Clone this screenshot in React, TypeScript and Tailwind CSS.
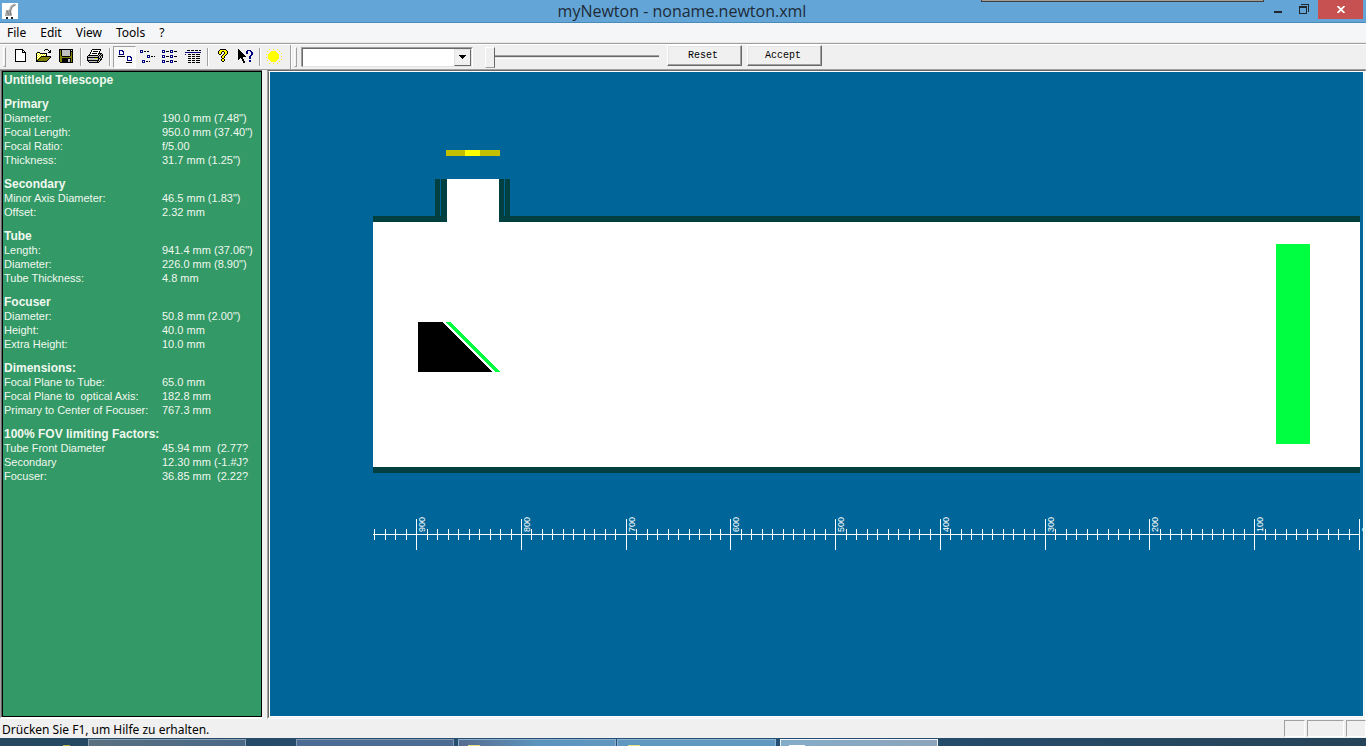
import type { ReactNode } from "react";

const PALETTE: Record<string, string> = {
  "#": "#000000",
  w: "#ffffff",
  o: "#808000",
  y: "#ffff00",
  n: "#000080",
  g: "#c0c0c0",
  d: "#808080",
};

function Bitmap({ rows }: { rows: string[] }) {
  const width = Math.max(...rows.map((r) => r.length));
  const cells: ReactNode[] = [];
  rows.forEach((row, y) => {
    let x = 0;
    while (x < row.length) {
      const ch = row[x];
      let end = x + 1;
      while (end < row.length && row[end] === ch) end++;
      if (PALETTE[ch]) {
        cells.push(<rect key={`${x}-${y}`} x={x} y={y} width={end - x} height={1} fill={PALETTE[ch]} />);
      }
      x = end;
    }
  });
  return (
    <svg width={width} height={rows.length} shapeRendering="crispEdges" aria-hidden="true">
      {cells}
    </svg>
  );
}

const NEW_ICON = [
  "########...",
  "#wwwwww##..",
  "#wwwwww#w#.",
  "#wwwwww####",
  "#wwwwwwwww#",
  "#wwwwwwwww#",
  "#wwwwwwwww#",
  "#wwwwwwwww#",
  "#wwwwwwwww#",
  "#wwwwwwwww#",
  "#wwwwwwwww#",
  "#wwwwwwwww#",
  "###########",
];
const OPEN_ICON = [
  ".........###....",
  "........#...#.#.",
  ".............##.",
  ".###........###.",
  "#ywy#######.....",
  "#wywywywyw#.....",
  "#ywywywywy#.....",
  "#wywy##########.",
  "#ywy#ooooooooo#.",
  "#wy#ooooooooo#..",
  "#y#ooooooooo#...",
  "##ooooooooo#....",
  "###########.....",
];
const SAVE_ICON = [
  "##############.",
  "#o#gggggggg#g#",
  "#o#gggggggg###",
  "#o#gggggggg#o#",
  "#o#gggggggg#o#",
  "#o#gggggggg#o#",
  "#o#gggggggg#o#",
  "#oo########oo#",
  "#oooooooooooo#",
  "#oo#########o#",
  "#oo######gg#o#",
  "#oo######gg#o#",
  "#oo######gg#o#",
  ".#############",
];
const PRINT_ICON = [
  ".....#########...",
  "....#wwwwwwww#..",
  "....#w#####w#...",
  "...#wwwwwwww#...",
  "...#w#####w####.",
  "..#wwwwwwww#g#g#",
  ".##########g#g##",
  "#gggggggggg#g#g#",
  "############g#g#",
  "#gggggggyyg##g#.",
  "#gggggggggg#g##.",
  "############g#..",
  ".#gggggggg#g#...",
  "..##########....",
];
const LARGE_ICON = [
  "",
  ".nnnn.........",
  ".nwwnn........",
  ".nwwwn........",
  ".nwwwn........",
  ".nnnnn........",
  "..............",
  "#######..nnnn.",
  ".........nwwnn",
  ".........nwwwn",
  ".........nwwwn",
  ".........nnnnn",
  "..............",
  "........######",
];
const SMALL_ICON = [
  "",
  "nnn............",
  "nwn.##.##......",
  "nnn............",
  "...............",
  "...............",
  ".......nnn.....",
  ".......nwn.##.#",
  ".......nnn.....",
  "...............",
  "...............",
  "..nnn..........",
  "..nwn.##.#.....",
  "..nnn..........",
];
const LIST_ICON = [
  "",
  "nnn.....nnn......",
  "nwn.###.nwn.###",
  "nnn.....nnn....",
  "...............",
  "...............",
  "nnn.....nnn....",
  "nwn.###.nwn.###",
  "nnn.....nnn....",
  "...............",
  "...............",
  "nnn.....nnn....",
  "nwn.###.nwn.###",
  "nnn.....nnn....",
];
const DETAIL_ICON = [
  "",
  "..###.###.###.##.",
  "................",
  "nnnnnnnnnnnnnnnn",
  "................",
  "n..###.###.####",
  "................",
  "...###.###.####",
  "................",
  "...###.###.####",
  "................",
  "...###.###.####",
  "................",
  "...###.###.####",
];
const HELP_ICON = [
  "..######..",
  ".#yyyyyy#.",
  "#yyy##yyy#",
  "#yy#..#yy#",
  "#yy#..#yy#",
  ".##..#yy#.",
  "....#yy#..",
  "...#yy#...",
  "...#yy#...",
  "....##....",
  "...#yy#...",
  "...#yy#...",
  "....##....",
];
const CONTEXT_ICON = [
  "#...............",
  "##.......nnnn...",
  "###.....nn..nn..",
  "####....nn...nn.",
  "#####...nn...nn.",
  "######.......nn.",
  "#######.....nn..",
  "########...nn...",
  "#####......nn...",
  "##.##......nn...",
  "#...##..........",
  "....##.....nn...",
  ".....##....nn...",
  ".....##.........",
];
const SUN_ICON = [
  "...y...y...y.....",
  "................",
  ".y...yyyyy...y..",
  "....yyyyyyy.....",
  "...yyyyyyyyy...y",
  "y.yyyyyyyyyyy...",
  "..yyyyyyyyyyy...",
  "..yyyyyyyyyyy..y",
  "y.yyyyyyyyyyy...",
  "..yyyyyyyyyyy...",
  "...yyyyyyyyy...y",
  ".y..yyyyyyy.....",
  ".....yyyyy...y..",
  "................",
  "...y...y...y....",
];

function ToolButton({ label, rows, pressed }: { label: string; rows: string[]; pressed?: boolean }) {
  return (
    <button
      type="button"
      aria-label={label}
      aria-pressed={pressed}
      className={
        pressed
          ? "flex h-[22px] w-[23px] shrink-0 justify-center border border-t-[#a0a0a0] border-l-[#a0a0a0] border-r-white border-b-white bg-[#f8f8f8] pt-[2px]"
          : "flex h-[22px] w-[23px] shrink-0 justify-center border border-transparent pt-[2px]"
      }
    >
      <Bitmap rows={rows} />
    </button>
  );
}

function Separator() {
  return (
    <div className="flex h-[18px] w-[6px] shrink-0 justify-center">
      <div className="w-[2px] border-r border-l border-l-[#a0a0a0] border-r-white" />
    </div>
  );
}

function Grip() {
  return <div className="h-[20px] w-[3px] shrink-0 border border-t-white border-l-white border-r-[#a0a0a0] border-b-[#a0a0a0]" />;
}

type Section = { title: string; rows: [string, string][] };

const SECTIONS: Section[] = [
  {
    title: "Primary",
    rows: [
      ["Diameter:", '190.0 mm (7.48")'],
      ["Focal Length:", '950.0 mm (37.40")'],
      ["Focal Ratio:", "f/5.00"],
      ["Thickness:", '31.7 mm (1.25")'],
    ],
  },
  {
    title: "Secondary",
    rows: [
      ["Minor Axis Diameter:", '46.5 mm (1.83")'],
      ["Offset:", "2.32 mm"],
    ],
  },
  {
    title: "Tube",
    rows: [
      ["Length:", '941.4 mm (37.06")'],
      ["Diameter:", '226.0 mm (8.90")'],
      ["Tube Thickness:", "4.8 mm"],
    ],
  },
  {
    title: "Focuser",
    rows: [
      ["Diameter:", '50.8 mm (2.00")'],
      ["Height:", "40.0 mm"],
      ["Extra Height:", "10.0 mm"],
    ],
  },
  {
    title: "Dimensions:",
    rows: [
      ["Focal Plane to Tube:", "65.0 mm"],
      ["Focal Plane to  optical Axis:", "182.8 mm"],
      ["Primary to Center of Focuser:", "767.3 mm"],
    ],
  },
  {
    title: "100% FOV limiting Factors:",
    rows: [
      ["Tube Front Diameter", "45.94 mm  (2.77?"],
      ["Secondary", "12.30 mm (-1.#J?"],
      ["Focuser:", "36.85 mm  (2.22?"],
    ],
  },
];

function DataPanel() {
  return (
    <aside className="w-[262px] shrink-0 border-t border-b-2 border-l border-t-[#696969] border-b-white border-l-[#a0a0a0]">
      <div className="h-full border-l border-l-[#696969]">
        <div className="flex h-full flex-col gap-[10px] overflow-hidden border border-black bg-[#339966] px-px pt-px font-['Liberation_Sans',Arial,sans-serif] text-[11px] leading-[14px] text-[#f0f8f0]">
          <h1 className="text-[12px] leading-[14px] font-bold">Untitleld Telescope</h1>
          {SECTIONS.map((s) => (
            <section key={s.title}>
              <h2 className="text-[12px] leading-[14px] font-bold">{s.title}</h2>
              <dl className="grid grid-cols-[158px_1fr] whitespace-pre">
                {s.rows.map(([k, v]) => (
                  <div key={k} className="contents">
                    <dt>{k}</dt>
                    <dd>{v}</dd>
                  </div>
                ))}
              </dl>
            </section>
          ))}
        </div>
      </div>
    </aside>
  );
}

const SCALE_ORIGIN = 1089;
const UNIT = 10.475;

const tickX = (i: number) => Math.ceil(SCALE_ORIGIN - i * UNIT - 0.5);

function Drawing() {
  const ticks = Array.from({ length: 95 }, (_, i) => i);
  return (
    <svg viewBox="0 0 1093 644" preserveAspectRatio="xMinYMin meet" className="block h-full w-full" shapeRendering="crispEdges" role="img" aria-label="Telescope cross section">
      <rect x="176" y="78" width="54" height="6" fill="#c4c000" />
      <rect x="195" y="78" width="15" height="6" fill="#ffff00" />
      <rect x="103" y="144" width="987" height="257" fill="#004040" />
      <rect x="103" y="150" width="987" height="245" fill="#ffffff" />
      <rect x="165" y="107" width="5" height="38" fill="#004040" />
      <rect x="171" y="107" width="6" height="38" fill="#004040" />
      <rect x="229" y="107" width="5" height="38" fill="#004040" />
      <rect x="235" y="107" width="5" height="38" fill="#004040" />
      <rect x="177" y="107" width="52" height="44" fill="#ffffff" />
      <polygon points="148,250 173,250 222.5,300 148,300" fill="#000000" />
      <polygon points="176,250 181,250 230,300 225,300" fill="#00ff40" />
      <rect x="1006" y="172" width="34" height="200" fill="#00ff40" />
      <rect x="103" y="462" width="987" height="1" fill="#ffffff" />
      {ticks.map((i) => {
        const major = i % 10 === 0;
        return <rect key={i} x={tickX(i)} y={major ? 447 : 457} width="1" height={major ? 31 : 11} fill="#ffffff" />;
      })}
      {ticks
        .filter((i) => i % 10 === 0)
        .map((i) => (
          <text key={i} transform={`translate(${tickX(i) + 9} 460) rotate(-90)`} className="fill-white font-['Liberation_Sans',Arial,sans-serif] text-[9px]">
            {i * 10}
          </text>
        ))}
    </svg>
  );
}

function TitleBar() {
  return (
    <header className="relative flex h-[23px] shrink-0 items-start border-b border-b-[#4a8ab8] bg-[#62a5d6] pr-[3px] pl-[2px]">
      <div className="absolute top-0 right-[102px] h-[2px] w-[283px] border-x border-b border-[#404040] bg-[#a09c98]" />
      <svg width="16" height="16" viewBox="0 0 16 16" className="mt-[3px] shrink-0" aria-hidden="true">
        <rect width="16" height="16" fill="#ffffff" />
        <path d="M8 8 L9.500 3.500 L13 1.500" fill="none" stroke="#b0b0b0" strokeWidth="2.400" />
        <path d="M10 4 L14 1.500M8 9l2-5" stroke="#808080" strokeWidth="0.800" />
        <path d="M4 7h5l1 6H3z" fill="#a8a8a8" />
        <path d="M5 8l2 4M8 7l1 5" stroke="#7a7a7a" strokeWidth="1" />
        <path d="M4 14h2v2H4zM9 14h2v2H9z" fill="#202020" />
      </svg>
      <div className="min-w-0 flex-1 pl-[72px] text-center text-[16px] leading-[23px] text-[#1e2a36]">
        myNewton - noname.newton.xml
      </div>
      <div className="flex h-[19px] shrink-0">
        <button type="button" aria-label="Minimize" className="flex w-[25px] items-start pt-[11px]">
          <span className="h-[2px] w-[8px] bg-[#1f262c]" />
        </button>
        <button type="button" aria-label="Restore" className="flex w-[19px] items-start pt-[4px]">
          <svg width="10" height="10" viewBox="0 0 10 10" shapeRendering="crispEdges" className="shrink-0">
            <path d="M2 0h8v8h-1V1H2z" fill="#1f262c" />
            <path d="M0 2h8v8H0zM1 4v5h6V4z" fillRule="evenodd" fill="#1f262c" />
          </svg>
        </button>
        <button type="button" aria-label="Close" className="flex w-[45px] items-start justify-center bg-[#c75050] pt-[6px]">
          <svg width="8" height="7" viewBox="0 0 8 7">
            <path d="M0.500 0l7 7M7.500 0l-7 7" stroke="#ffffff" strokeWidth="1.800" />
          </svg>
        </button>
      </div>
    </header>
  );
}

function Toolbar() {
  return (
    <div className="flex h-[25px] shrink-0 items-center overflow-hidden border-b border-b-[#a0a0a0] bg-[#f0f0f0] pl-[3px]">
      <Grip />
      <div className="flex items-center pl-[3px]">
        <ToolButton label="New" rows={NEW_ICON} />
        <ToolButton label="Open" rows={OPEN_ICON} />
        <ToolButton label="Save" rows={SAVE_ICON} />
        <Separator />
        <ToolButton label="Print" rows={PRINT_ICON} />
        <Separator />
        <ToolButton label="Large icons" rows={LARGE_ICON} pressed />
        <ToolButton label="Small icons" rows={SMALL_ICON} />
        <ToolButton label="List" rows={LIST_ICON} />
        <ToolButton label="Details" rows={DETAIL_ICON} />
        <Separator />
        <ToolButton label="About" rows={HELP_ICON} />
        <ToolButton label="Context help" rows={CONTEXT_ICON} />
        <Separator />
        <ToolButton label="Rays" rows={SUN_ICON} />
      </div>
      <div className="mr-[2px] ml-[4px] h-full w-[2px] border-r border-l border-l-[#a0a0a0] border-r-white" />
      <Grip />
      <div className="ml-[4px] grid h-[20px] w-[172px] shrink-0 border border-t-[#a0a0a0] border-l-[#a0a0a0] border-r-white border-b-white">
        <div className="grid border border-t-[#696969] border-l-[#696969] border-r-[#e3e3e3] border-b-[#e3e3e3] bg-white">
          <select aria-label="Element" className="col-start-1 row-start-1 h-full w-full appearance-none bg-white text-[11px] outline-none">
            <option></option>
          </select>
          <div className="pointer-events-none col-start-1 row-start-1 flex w-[17px] items-center justify-center justify-self-end border border-t-[#e3e3e3] border-l-[#e3e3e3] border-r-[#696969] border-b-[#696969] bg-[#f0f0f0]">
            <Bitmap rows={["#######", ".#####.", "..###..", "...#..."]} />
          </div>
        </div>
      </div>
      <input
        type="range"
        aria-label="Value"
        min={0}
        max={100}
        defaultValue={0}
        className="ml-[12px] h-[22px] w-[174px] shrink-0 appearance-none bg-transparent [&::-webkit-slider-runnable-track]:h-[4px] [&::-webkit-slider-runnable-track]:border-y [&::-webkit-slider-runnable-track]:border-t-[#a0a0a0] [&::-webkit-slider-runnable-track]:border-b-white [&::-webkit-slider-runnable-track]:bg-linear-to-b [&::-webkit-slider-runnable-track]:from-[#696969] [&::-webkit-slider-runnable-track]:from-50% [&::-webkit-slider-runnable-track]:to-[#e3e3e3] [&::-webkit-slider-runnable-track]:to-50% [&::-webkit-slider-thumb]:-mt-[9px] [&::-webkit-slider-thumb]:h-[21px] [&::-webkit-slider-thumb]:w-[10px] [&::-webkit-slider-thumb]:appearance-none [&::-webkit-slider-thumb]:border [&::-webkit-slider-thumb]:border-t-white [&::-webkit-slider-thumb]:border-r-[#696969] [&::-webkit-slider-thumb]:border-b-[#a0a0a0] [&::-webkit-slider-thumb]:border-l-white [&::-webkit-slider-thumb]:bg-[#f0f0f0]"
      />
      <div className="ml-[8px] flex gap-[5px] self-start font-['Liberation_Mono','Courier_New',monospace] text-[10px] leading-[18px]">
        {["Reset", "Accept"].map((t) => (
          <button
            key={t}
            type="button"
            className="h-[21px] w-[75px] border border-t-white border-l-white border-r-[#696969] border-b-[#696969] bg-[#f0f0f0] pt-px pr-[3px] text-black shadow-[inset_-1px_-1px_0_#a0a0a0,inset_1px_1px_0_#e3e3e3]"
          >
            {t}
          </button>
        ))}
      </div>
    </div>
  );
}

function Taskbar() {
  return (
    <nav aria-label="Taskbar" className="flex h-[8px] shrink-0 overflow-hidden bg-linear-to-r from-[#264860] via-[#255078] to-[#264457] pt-px">
      <div className="flex w-[88px] shrink-0 items-end justify-end pr-[18px]">
        <span className="h-px w-[7px] bg-[#b8b040]" />
      </div>
      <button type="button" aria-label="Task 1" className="mr-[50px] h-[9px] w-[158px] shrink-0 border border-[#8ba0b0] bg-linear-to-r from-[#5a7080] to-[#4a6888]" />
      <button type="button" aria-label="Task 2" className="mr-[4px] h-[9px] w-[158px] shrink-0 border border-[#8498b0] bg-[#4c6c94]" />
      <button type="button" aria-label="Task 3" className="mr-px flex h-[9px] w-[158px] shrink-0 items-start border border-[#8cb0cc] bg-linear-to-r from-[#586c90] via-[#5a94bc] to-[#6098c0] pt-[5px] pl-[9px]">
        <span className="h-px w-[12px] bg-[#e8e088]" />
      </button>
      <button type="button" aria-label="Task 4" className="mr-[4px] flex h-[9px] w-[159px] shrink-0 items-start border border-[#8cb4d0] bg-[#6098c0] pt-[5px] pl-[10px]">
        <span className="h-px w-[12px] bg-[#e8e088]" />
      </button>
      <button type="button" aria-label="myNewton" className="flex h-[9px] w-[158px] shrink-0 items-start border border-[#f0f4f8] bg-linear-to-r from-[#84acc8] to-[#8ca4bc] pt-[5px] pl-[8px]">
        <span className="h-px w-[16px] bg-white" />
      </button>
    </nav>
  );
}

export default function App() {
  return (
    <div className="flex h-screen flex-col overflow-hidden bg-[#f0f0f0] font-['Open_Sans','Noto_Sans',sans-serif] text-black">
      <TitleBar />
      <nav aria-label="Menu" className="flex h-[20px] shrink-0 items-center border-b border-b-[#e8e8e8] bg-[#f5f6f8] font-['Noto_Sans',sans-serif] text-[12px] leading-[18px]">
        {["File", "Edit", "View", "Tools", "?"].map((m) => (
          <button key={m} type="button" className="px-[7px]">
            {m}
          </button>
        ))}
      </nav>
      <div className="h-[2px] shrink-0 border-b border-b-white bg-[#a0a0a0]" />
      <Toolbar />
      <main className="flex min-h-0 flex-1 gap-[5px]">
        <DataPanel />
        <div className="min-w-0 flex-1 border border-t-[#696969] border-l-[#a0a0a0] border-r-white border-b-white">
          <div className="h-full border border-t-white border-l-[#696969] border-r-[#f0f0f0] border-b-[#f0f0f0]">
            <div className="h-full border border-t-0 border-white bg-[#006699]">
              <Drawing />
            </div>
          </div>
        </div>
      </main>
      <footer className="flex h-[19px] shrink-0 items-center">
        <p className="min-w-0 flex-1 pt-[2px] pl-[2px] font-['Noto_Sans',sans-serif] text-[12px] leading-[17px]">
          Drücken Sie F1, um Hilfe zu erhalten.
        </p>
        <div className="flex h-[17px] gap-[2px]">
          <div className="w-[21px] border border-t-[#a0a0a0] border-l-[#a0a0a0] border-r-white border-b-white" />
          <div className="w-[37px] border border-t-[#a0a0a0] border-l-[#a0a0a0] border-r-white border-b-white" />
          <div className="w-[20px] border border-t-[#a0a0a0] border-l-[#a0a0a0] border-r-white border-b-white" />
        </div>
      </footer>
      <Taskbar />
    </div>
  );
}
